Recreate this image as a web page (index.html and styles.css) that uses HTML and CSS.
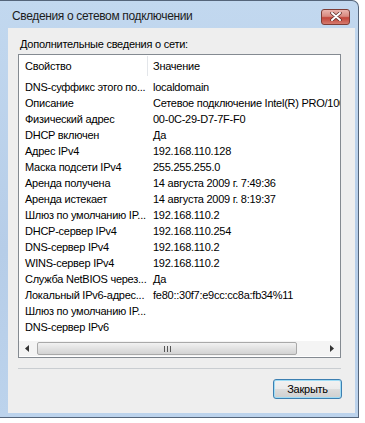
FILE: index.html
```html
<!DOCTYPE html>
<html lang="ru">
<head>
<meta charset="UTF-8" />
<title>Сведения о сетевом подключении</title>
<link rel="stylesheet" href="styles.css">
</head>
<body>

<div class="window">
  <div class="titlebar">
    <span class="title">Сведения о сетевом подключении</span>
    <button class="close" title="Закрыть">
      <svg width="12" height="9" viewBox="0 0 12 9">
        <path d="M2 1 L10 8 M10 1 L2 8" stroke="#5a2a26" stroke-width="3.4" stroke-linecap="round"/>
        <path d="M2 1 L10 8 M10 1 L2 8" stroke="#fff" stroke-width="2" stroke-linecap="round"/>
      </svg>
    </button>
  </div>

  <div class="client">
    <div class="caption">Дополнительные сведения о сети:</div>

    <div class="listbox">
      <div class="header">
        <div class="col-prop">Свойство</div>
        <div class="col-val">Значение</div>
      </div>

      <div class="rows">
        <div class="row"><div class="col-prop">DNS-суффикс этого по...</div><div class="col-val">localdomain</div></div>
        <div class="row"><div class="col-prop">Описание</div><div class="col-val">Сетевое подключение Intel(R) PRO/1000 MT</div></div>
        <div class="row"><div class="col-prop">Физический адрес</div><div class="col-val">00-0C-29-D7-7F-F0</div></div>
        <div class="row"><div class="col-prop">DHCP включен</div><div class="col-val">Да</div></div>
        <div class="row"><div class="col-prop">Адрес IPv4</div><div class="col-val">192.168.110.128</div></div>
        <div class="row"><div class="col-prop">Маска подсети IPv4</div><div class="col-val">255.255.255.0</div></div>
        <div class="row"><div class="col-prop">Аренда получена</div><div class="col-val">14 августа 2009 г. 7:49:36</div></div>
        <div class="row"><div class="col-prop">Аренда истекает</div><div class="col-val">14 августа 2009 г. 8:19:37</div></div>
        <div class="row"><div class="col-prop">Шлюз по умолчанию IP...</div><div class="col-val">192.168.110.2</div></div>
        <div class="row"><div class="col-prop">DHCP-сервер IPv4</div><div class="col-val">192.168.110.254</div></div>
        <div class="row"><div class="col-prop">DNS-сервер IPv4</div><div class="col-val">192.168.110.2</div></div>
        <div class="row"><div class="col-prop">WINS-сервер IPv4</div><div class="col-val">192.168.110.2</div></div>
        <div class="row"><div class="col-prop">Служба NetBIOS через...</div><div class="col-val">Да</div></div>
        <div class="row"><div class="col-prop">Локальный IPv6-адрес...</div><div class="col-val">fe80::30f7:e9cc:cc8a:fb34%11</div></div>
        <div class="row"><div class="col-prop">Шлюз по умолчанию IP...</div><div class="col-val"></div></div>
        <div class="row"><div class="col-prop">DNS-сервер IPv6</div><div class="col-val"></div></div>
      </div>

      <div class="hscroll">
        <div class="arrow">
          <svg width="4" height="7" viewBox="0 0 4 7"><path d="M4 0 L0 3.5 L4 7 Z" fill="#333"/></svg>
        </div>
        <div class="track">
          <div class="thumb">
            <svg width="7" height="6" viewBox="0 0 7 6"><path d="M0.5 0 V6 M3.5 0 V6 M6.5 0 V6" stroke="#555" stroke-width="1"/></svg>
          </div>
        </div>
        <div class="arrow">
          <svg width="4" height="7" viewBox="0 0 4 7"><path d="M0 0 L4 3.5 L0 7 Z" fill="#333"/></svg>
        </div>
      </div>
    </div>

    <div class="separator"></div>

    <div class="buttons">
      <button class="btn">Закрыть</button>
    </div>
  </div>
</div>

</body>
</html>
```

FILE: styles.css
```css
/* окно диалога */
body {
  margin: 0;
  background: #fff;
  font-family: 'Liberation Sans', Arial, sans-serif;
  font-size: 11px;
  letter-spacing: -0.25px;
  color: #000;
}

.window {
  width: 359px;
  height: 418px;
  box-sizing: border-box;
  display: flex;
  flex-direction: column;
  padding: 0 3px 4px 8px;
  border: 1px solid #55657a;
  border-left: none;
  border-radius: 0 7px 0 0;
  background: linear-gradient(#c2d8ef, #b6cde8 60%, #bcd3ec);
}

.titlebar {
  height: 27px;
  display: flex;
  align-items: center;
  justify-content: space-between;
  padding: 0 5px 0 4px;
}
.title {
  font-size: 12px;
  letter-spacing: -0.35px;
  color: #1c1c1c;
  padding-top: 2px;
}
.close {
  width: 29px;
  height: 16px;
  margin-top: 4px;
  padding: 0;
  display: flex;
  align-items: center;
  justify-content: center;
  border: 1px solid #7e3d36;
  border-radius: 3px;
  background: linear-gradient(#eab4ad, #d88a80 45%, #c2453a 55%, #d57a6e);
}

/* клиентская область */
.client {
  flex: 1;
  display: flex;
  flex-direction: column;
  background: #eeeeee;
  padding: 9px 14px 0 10px;
}

.caption {
  padding-left: 2px;
  height: 17px;
  line-height: 15px;
}

.listbox {
  height: 304px;
  box-sizing: border-box;
  display: flex;
  flex-direction: column;
  border: 1px solid #848a91;
  background: #fff;
  overflow: hidden;
}

.header {
  height: 22px;
  flex: none;
  display: flex;
  align-items: center;
}
.header .col-val {
  border-left: 1px solid #e3e6ea;
  height: 20px;
  line-height: 20px;
}

.rows {
  flex: 1;
  padding-top: 2px;
  overflow: hidden;
}
.row {
  height: 16px;
  line-height: 16px;
  display: flex;
  white-space: nowrap;
}

.col-prop {
  width: 122px;
  flex: none;
  padding-left: 6px;
  white-space: nowrap;
}
.col-val {
  padding-left: 5px;
  white-space: nowrap;
}
.row .col-val {
  padding-left: 6px;
}

/* горизонтальная прокрутка */
.hscroll {
  height: 15px;
  flex: none;
  display: flex;
  align-items: center;
  background: #f4f4f4;
  margin-bottom: 1px;
}
.arrow {
  width: 16px;
  height: 15px;
  display: flex;
  align-items: center;
  justify-content: center;
}
.track {
  flex: 1;
  height: 15px;
  padding: 1px 27px 1px 2px;
  box-sizing: border-box;
}
.thumb {
  height: 100%;
  box-sizing: border-box;
  border: 1px solid #a9a9a9;
  border-radius: 2px;
  background: linear-gradient(#f2f2f2, #e2e2e2 50%, #d3d3d3);
  display: flex;
  align-items: center;
  justify-content: center;
}

.separator {
  height: 1px;
  margin-top: 10px;
  background: #c9cdd1;
}

.buttons {
  display: flex;
  justify-content: flex-end;
  padding-top: 10px;
  margin-right: -1px;
}
.btn {
  width: 69px;
  height: 20px;
  padding: 0;
  font-family: 'Liberation Sans', Arial, sans-serif;
  font-size: 11px;
  letter-spacing: -0.25px;
  color: #000;
  border: 1px solid #3c7fb1;
  border-radius: 3px;
  box-shadow: inset 0 0 0 1px #9fdcf5;
  background: linear-gradient(#f2f2f2, #ebebeb 50%, #dddddd 51%, #cfcfcf);
}
```
